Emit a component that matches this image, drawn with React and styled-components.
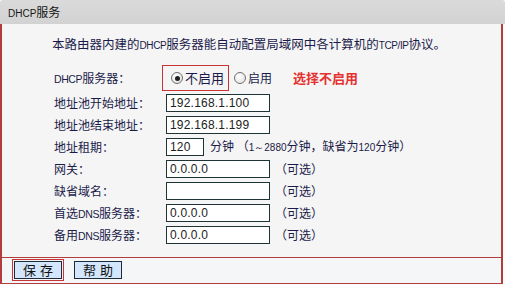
import React from 'react';
import styled, { createGlobalStyle } from 'styled-components';

const GlobalStyle = createGlobalStyle`
  body {
    margin: 0;
    background: #fbfbfb;
    font-family: "Noto Sans CJK SC", "Liberation Sans", sans-serif;
  }
`;

const Page = styled.div`
  width: 505px;
`;

const Header = styled.div`
  height: 24px;
  line-height: 24px;
  padding-left: 8px;
  background: linear-gradient(#dadada, #d2d2d2);
  border-radius: 3px 3px 0 0;
  font-size: 12px;
  color: #151515;
`;

const Latin = styled.span`
  font-family: "Liberation Sans", sans-serif;
  font-size: ${(p) => p.$size || 10}px;
  letter-spacing: ${(p) => p.$tight || 0}px;
`;

const Panel = styled.div`
  width: 503px;
  box-sizing: border-box;
  border-left: 2px solid #b33c3c;
  border-right: 2px solid #b33c3c;
  background: #f5f5f5;
`;

const Intro = styled.p`
  margin: 0;
  padding: 11px 0 9px 50px;
  font-size: 12.5px;
  line-height: 18px;
  color: #1b1b4a;
`;

const Form = styled.div`
  display: grid;
  grid-template-columns: 112px 1fr;
  grid-template-rows: 28px;
  grid-auto-rows: 22px;
  align-items: center;
  padding: 0 0 11px 52px;
`;

const Label = styled.div`
  font-size: 12px;
  line-height: 16px;
  color: #1b1b4a;
`;

const Field = styled.div`
  display: flex;
  align-items: center;
  font-size: 12px;
  line-height: 16px;
  color: #1b1b4a;
`;

const RadioBox = styled.div`
  display: flex;
  align-items: center;
  height: 26px;
  box-sizing: border-box;
  margin-left: -4px;
  padding: 0 4px 0 8px;
  border: ${(p) => (p.$marked ? '1px solid #c83434' : '1px solid transparent')};
`;

const Radio = styled.span`
  position: relative;
  width: 12px;
  height: 12px;
  box-sizing: border-box;
  border-radius: 50%;
  border: 1px solid #707070;
  background: radial-gradient(circle at 40% 35%, #ffffff, #dcdcdc);
  margin-right: 2px;
  &::after {
    content: '';
    display: ${(p) => (p.$checked ? 'block' : 'none')};
    position: absolute;
    left: 2.5px;
    top: 2.5px;
    width: 5px;
    height: 5px;
    border-radius: 50%;
    background: #1e1e1e;
  }
`;

const RadioText = styled.span`
  font-size: ${(p) => p.$size || 12}px;
  color: #1b1b4a;
`;

const Hint = styled.span`
  margin-left: 16px;
  font-size: 13px;
  font-weight: bold;
  color: #e5312f;
`;

const Input = styled.div`
  width: ${(p) => p.$width || 104}px;
  height: 18px;
  box-sizing: border-box;
  border: 1px solid #1f3535;
  background: #fff;
  padding-left: 3px;
  font-family: "Liberation Sans", sans-serif;
  font-size: 12px;
  line-height: 16px;
  letter-spacing: 0.2px;
  color: #222;
`;

const Note = styled.span`
  margin-left: ${(p) => p.$gap || 5}px;
`;

const Footer = styled.div`
  width: 503px;
  box-sizing: border-box;
  border: 2px solid #b33c3c;
  border-top-width: 1px;
  border-bottom-width: 1px;
  background: #f5f6f8;
  padding: 1px 0 2px 10px;
  display: flex;
  align-items: center;
  gap: 10px;
`;

const SaveBox = styled.div`
  border: 1px solid #c83434;
  padding: 1px;
`;

const Button = styled.button`
  display: block;
  width: 48px;
  height: 18px;
  padding: 0;
  border: 1px solid #1d2b3a;
  background: #d3e6fb;
  font-family: "Noto Sans CJK SC", sans-serif;
  font-size: 13px;
  line-height: 16px;
  word-spacing: 1px;
  color: #111;
`;

const Dns = () => (
  <Latin $size={10.5} $tight={-0.4}>
    DNS
  </Latin>
);

const rows = [
  { label: '地址池开始地址：', value: '192.168.1.100' },
  { label: '地址池结束地址：', value: '192.168.1.199' },
];

const optional = [
  { label: '网关：', value: '0.0.0.0' },
  { label: '缺省域名：', value: '' },
  { label: <>首选<Dns />服务器：</>, value: '0.0.0.0' },
  { label: <>备用<Dns />服务器：</>, value: '0.0.0.0' },
];

export default function App() {
  return (
    <Page>
      <GlobalStyle />
      <Header>
        <Latin $size={10}>DHCP</Latin>服务
      </Header>
      <Panel>
        <Intro>
          本路由器内建的<Latin $tight={-0.4}>DHCP</Latin>服务器能自动配置局域网中各计算机的
          <Latin $tight={-0.4}>TCP/IP</Latin>协议。
        </Intro>
        <Form>
          <Label>
            <Latin $size={10.5} $tight={-0.4}>DHCP</Latin>服务器：
          </Label>
          <Field>
            <RadioBox $marked>
              <Radio $checked />
              <RadioText $size={13}>不启用</RadioText>
            </RadioBox>
            <RadioBox>
              <Radio />
              <RadioText>启用</RadioText>
            </RadioBox>
            <Hint>选择不启用</Hint>
          </Field>

          {rows.map((r, i) => (
            <React.Fragment key={i}>
              <Label>{r.label}</Label>
              <Field>
                <Input>{r.value}</Input>
              </Field>
            </React.Fragment>
          ))}

          <Label>地址租期：</Label>
          <Field>
            <Input $width={38}>120</Input>
            <Note $gap={6}>
              分钟 （<Latin>1～2880</Latin>分钟，缺省为<Latin>120</Latin>分钟）
            </Note>
          </Field>

          {optional.map((r, i) => (
            <React.Fragment key={i}>
              <Label>{r.label}</Label>
              <Field>
                <Input>{r.value}</Input>
                <Note>（可选）</Note>
              </Field>
            </React.Fragment>
          ))}
        </Form>
      </Panel>
      <Footer>
        <SaveBox>
          <Button>保 存</Button>
        </SaveBox>
        <Button>帮 助</Button>
      </Footer>
    </Page>
  );
}
